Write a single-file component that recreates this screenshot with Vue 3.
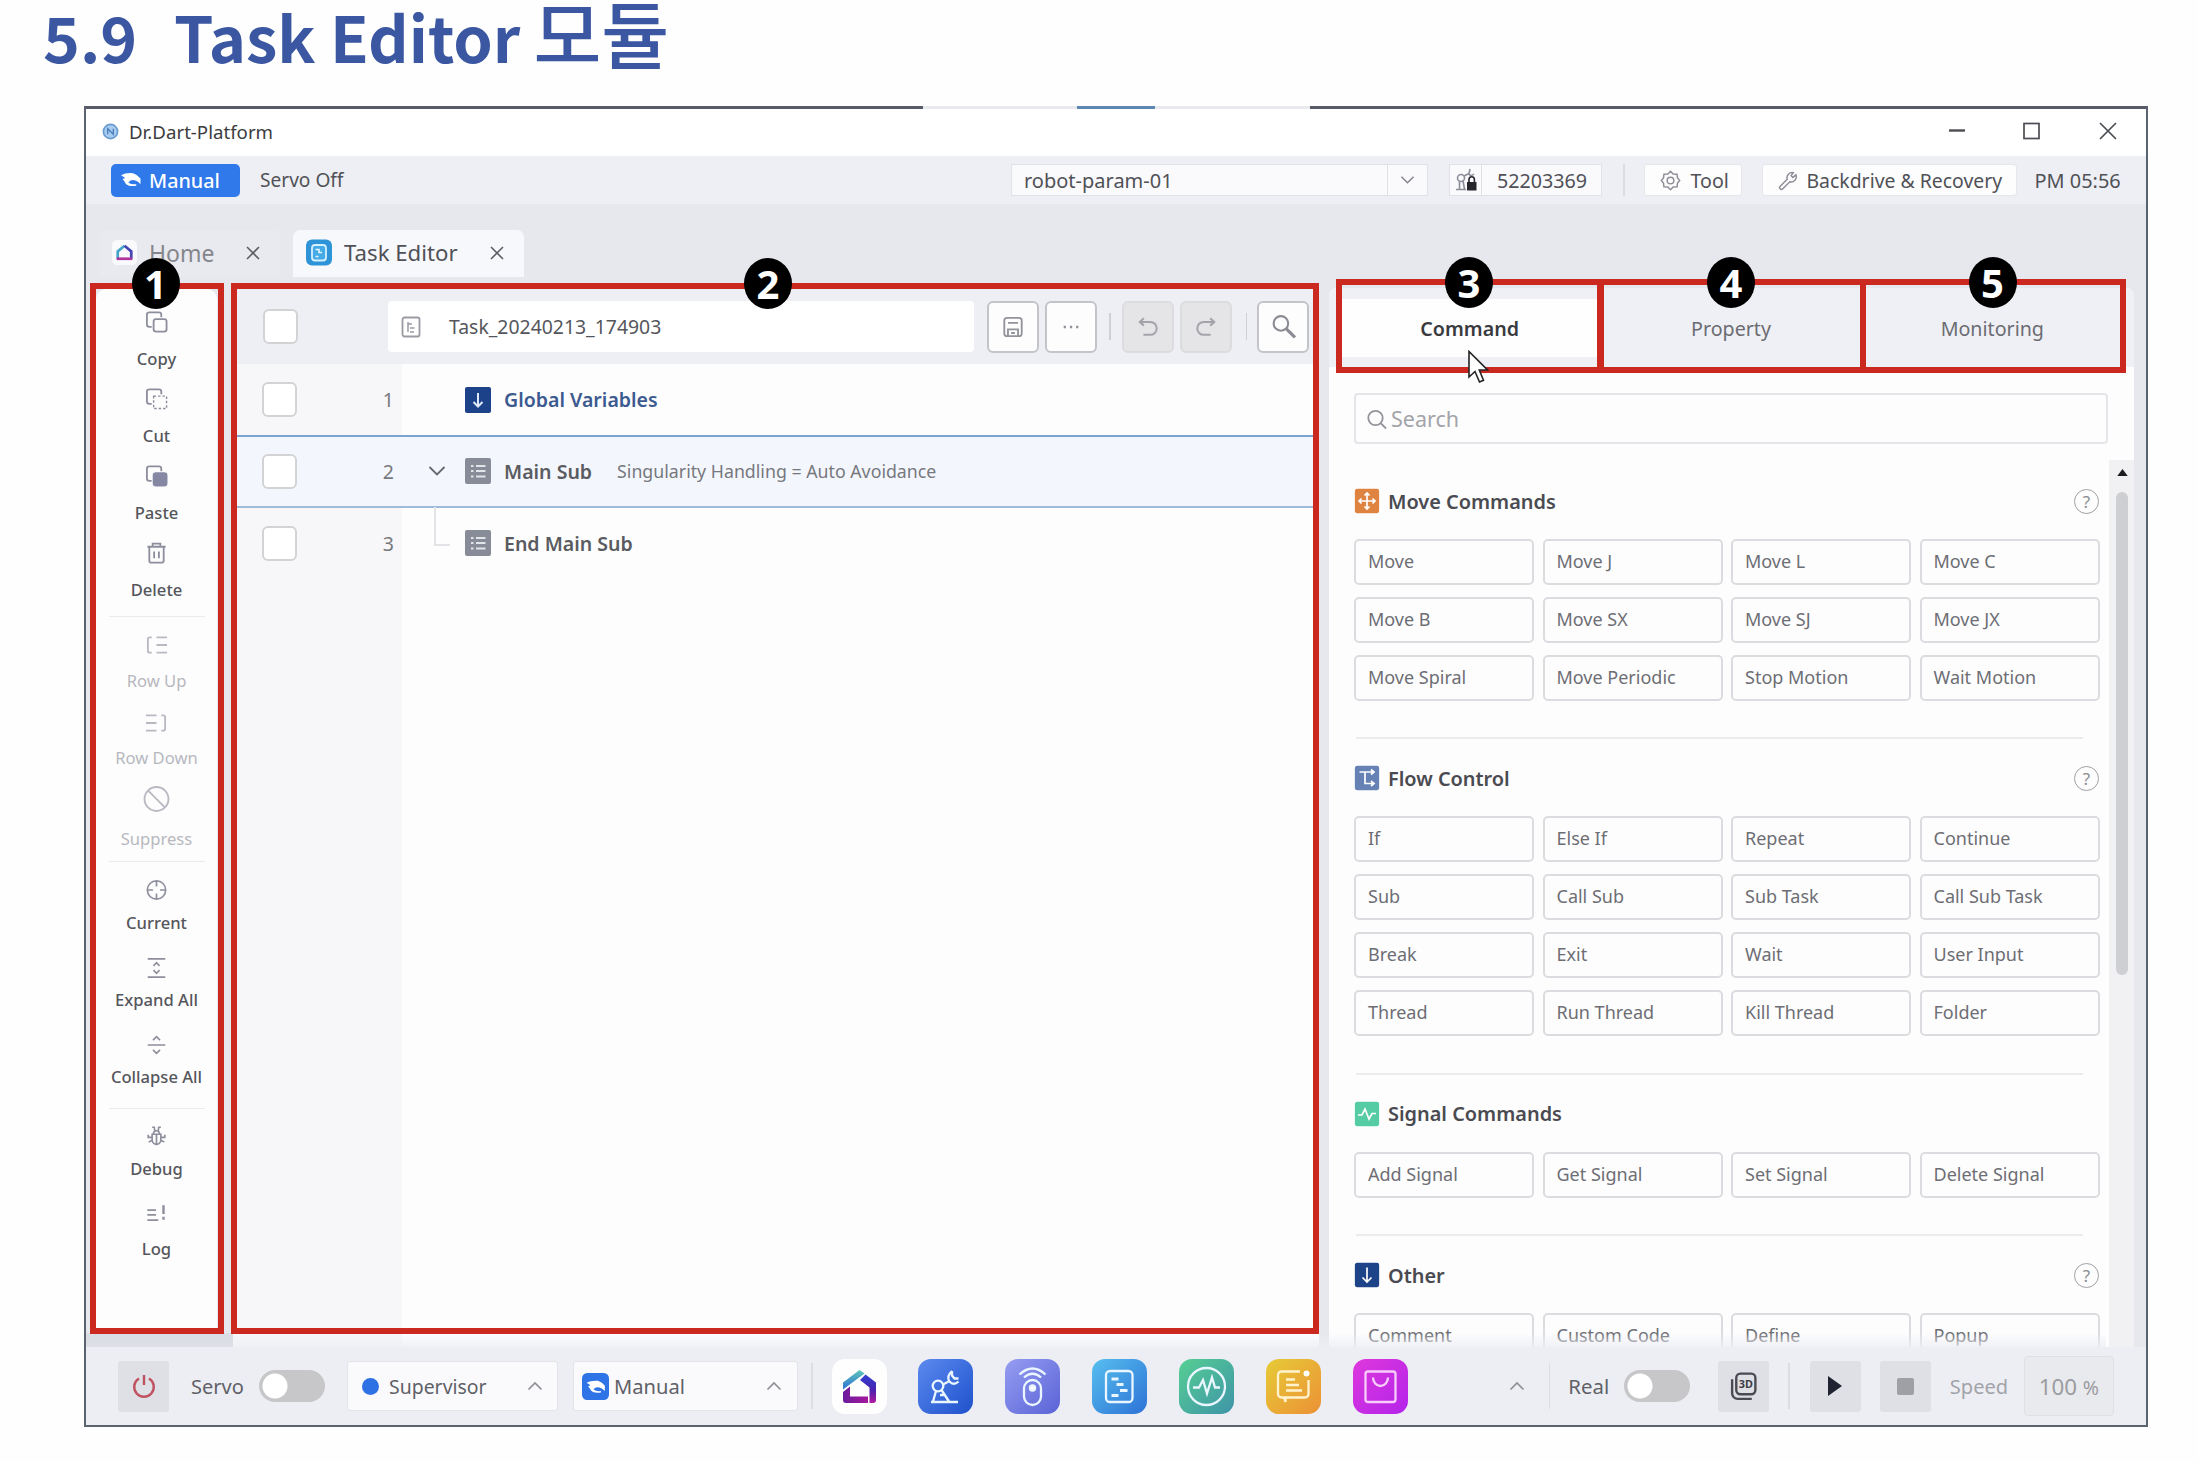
<script setup>
const icons = {
  copy: '<path d="M7 17H4.500a2.500 2.500 0 0 1-2.500-2.500V4.500A2.500 2.500 0 0 1 4.500 2H14.500a2.500 2.500 0 0 1 2.500 2.500V7"/><rect x="9" y="9" width="13.500" height="13" rx="2.500"/>',
  cut: '<path d="M7 17H4.500a2.500 2.500 0 0 1-2.500-2.500V4.500A2.500 2.500 0 0 1 4.500 2H14.500a2.500 2.500 0 0 1 2.500 2.500V7"/><rect x="9" y="9" width="13.500" height="13" stroke-width="1.500" stroke-dasharray="2.600 2"/>',
  paste: '<path d="M7 17H4.500a2.500 2.500 0 0 1-2.500-2.500V4.500A2.500 2.500 0 0 1 4.500 2H14.500a2.500 2.500 0 0 1 2.500 2.500V7"/><rect x="9" y="9" width="13.500" height="13" rx="2.500" fill="#8587a3" stroke="#8587a3"/>',
  trash: '<path d="M2.500 5.500H21.500M8 5V2.200H16V5M4.500 6V20a2 2 0 0 0 2 2H17.500a2 2 0 0 0 2-2V6M9.500 10.500V17.500M14.500 10.500V17.500"/>',
  rowUp: '<path d="M7 4H5a2 2 0 0 0-2 2V18a2 2 0 0 0 2 2H7M12 4H23M12 12H23M12 20H23"/>',
  rowDown: '<path d="M17 4H19a2 2 0 0 1 2 2V18a2 2 0 0 1-2 2H17M1 4H12M1 12H12M1 20H12"/>',
  ban: '<circle cx="12" cy="12" r="12.500"/><path d="M3.300 3.300L20.700 20.700"/>',
  target: '<circle cx="12" cy="12" r="10.500"/><path d="M12 1.500V8M12 16V22.500M1.500 12H8M16 12H22.500"/>',
  expand: '<path d="M2 1.500H22M2 22.500H22M8.500 9.500L12 6L15.500 9.500M8.500 14.500L12 18L15.500 14.500"/>',
  collapse: '<path d="M2 12H22M8 6.500L12 2.500L16 6.500M8 17.500L12 21.500L16 17.500"/>',
  bug: '<path d="M7 10H17V16a5 5.500 0 0 1-10 0ZM12 10V21.500M7 2H9.500L10 6.500M17 2H14.500L14 6.500M8.500 9.500a3.500 3.500 0 0 1 7 0M2.500 10.500V13.500H7M21.500 10.500V13.500H17M3 19L7.500 16.500M21 19L16.500 16.500"/>',
  log: '<path d="M1.500 7.500H11.500M1.500 13H11.500M1.500 19H14" /><path d="M20 2V12M20 15V18.500" stroke-width="2.800"/>',
}

const tools = [
  { cls: 'edit', items: [['copy', 'Copy'], ['cut', 'Cut'], ['paste', 'Paste'], ['trash', 'Delete']] },
  { cls: 'rows off', items: [['rowUp', 'Row Up'], ['rowDown', 'Row Down'], ['ban', 'Suppress']] },
  { cls: 'view', items: [['target', 'Current'], ['expand', 'Expand All'], ['collapse', 'Collapse All']] },
  { cls: 'dev', items: [['bug', 'Debug'], ['log', 'Log']] },
]

const glyphs = {
  move: '<path d="M13 5V21M5 13H21M10.500 7.500L13 5L15.500 7.500M10.500 18.500L13 21L15.500 18.500M7.500 10.500L5 13L7.500 15.500M18.500 10.500L21 13L18.500 15.500"/>',
  flow: '<path d="M5.500 7H20M11 7V18.500H20M17 4.500L20 7L17 9.500M17 16L20 18.500L17 21"/>',
  signal: '<path d="M4 14H8L11 8L15 18L18 12.500H22"/>',
  other: '<path d="M13 5.500V19.500M8.500 15.500L13 20L17.500 15.500"/>',
}

const groups = [
  { name: 'Move Commands', icon: 'move', color: '#df8341', help: true,
    items: ['Move', 'Move J', 'Move L', 'Move C', 'Move B', 'Move SX', 'Move SJ', 'Move JX', 'Move Spiral', 'Move Periodic', 'Stop Motion', 'Wait Motion'] },
  { name: 'Flow Control', icon: 'flow', color: '#6682b4', help: true,
    items: ['If', 'Else If', 'Repeat', 'Continue', 'Sub', 'Call Sub', 'Sub Task', 'Call Sub Task', 'Break', 'Exit', 'Wait', 'User Input', 'Thread', 'Run Thread', 'Kill Thread', 'Folder'] },
  { name: 'Signal Commands', icon: 'signal', color: '#56ccA4', help: false,
    items: ['Add Signal', 'Get Signal', 'Set Signal', 'Delete Signal'] },
  { name: 'Other', icon: 'other', color: '#1d4388', help: true,
    items: ['Comment', 'Custom Code', 'Define', 'Popup'] },
]

const apps = [
  { cls: 'robot', art: '<circle cx="20" cy="27" r="5.300"/><path d="M18 32L15 42.500M23.500 31L31 42.500M22 36H26M13 43H40M25 25.500L30.500 22.500M34 12Q28 17.500 31.500 22.500Q35.500 27 40.500 22.500M34 12V16.500L36.500 19.500H40.500"/>' },
  { cls: 'remote', art: '<rect x="19" y="21" width="17" height="25" rx="8.500"/><circle cx="27.500" cy="29" r="2.600" fill="#fff"/><path d="M14.500 15.500Q27.500 3.500 40.500 15.500M19 18.500Q27.500 11 36 18.500"/>' },
  { cls: 'task', art: '<rect x="14" y="12" width="26.500" height="31" rx="4"/><path d="M19.500 20H26.500M24.500 25.500H31.500M28 31.500H35.500M19.500 36.500H26.500" stroke-width="2.800"/>' },
  { cls: 'monitor', art: '<circle cx="27.500" cy="27.500" r="18.500"/><path d="M14 28.500H20L24 21L28 34.500L33 18.500L36 28.500H41"/>' },
  { cls: 'logs', art: '<path d="M34 12.500H15.500a3.500 3.500 0 0 0-3.500 3.500V35a3.500 3.500 0 0 0 3.500 3.500H18L19.500 43V38.500H39a3.500 3.500 0 0 0 3.500-3.500V21M20 20.500H29M20 26H33M20 31.500H36"/><circle cx="40.500" cy="14.500" r="3" fill="#fff" stroke="none"/>' },
  { cls: 'store', art: '<rect x="12.500" y="12.500" width="30" height="30.500" rx="2.500"/><path d="M20 18.500a7.500 8.500 0 0 0 15 0"/>' },
]

const rows = [
  { n: 1, name: 'Global Variables', kind: 'var' },
  { n: 2, name: 'Main Sub', note: 'Singularity Handling = Auto Avoidance', kind: 'sub', open: true },
  { n: 3, name: 'End Main Sub', kind: 'sub', child: true },
]
</script>

<template>
  <div class="page">
    <h1><span class="num">5.9</span><span class="en">Task Editor</span><span class="ko">모듈</span></h1>

    <main class="window">
      <header class="titlebar">
        <svg class="logo" viewBox="0 0 18 18"><circle cx="9" cy="9" r="7.500" fill="#a9cdf0" stroke="#6a9bd0" stroke-width="1.800"/><path d="M6 12V6L12 12V6" fill="none" stroke="#4d80bd" stroke-width="1.500"/></svg>
        <span>Dr.Dart-Platform</span>
        <svg class="winctl" viewBox="0 0 170 20"><path d="M1 9.500H17" stroke-width="2.400"/><rect x="76" y="2.500" width="15" height="15"/><path d="M152 2L168 18M168 2L152 18"/></svg>
      </header>

      <div class="toolbar">
        <div class="pill">
          <svg viewBox="0 0 20 14"><path d="M1 3Q5 0.500 12.500 1Q17 2.500 19.500 6V11.500Q16 7.500 12 7.500Q9 7.500 8 10Q11 12 15.500 11.500V13Q8 14 5.500 11Q4.500 9 2.500 6.500L5 5.500Z"/></svg>
          Manual
        </div>
        <span class="servo-off">Servo Off</span>
        <div class="combo"><span>robot-param-01</span><i><svg viewBox="0 0 16 10"><path d="M1.500 1.500L8 8L14.500 1.500"/></svg></i></div>
        <div class="serial">
          <i><svg viewBox="0 0 24 26" fill="none" stroke="#8b8d99" stroke-width="1.600"><circle cx="7" cy="11" r="3.500"/><path d="M5.500 14V22M9 14L10.500 22M2 22.500H12M10 9L15 6.500M15 6.500L16 2M15 7Q17 10 20 7"/><rect x="13" y="15" width="9.500" height="8.500" fill="#26262c" stroke="none"/><path d="M15 15V12.500a2.700 2.700 0 0 1 5.400 0V15" stroke="#26262c"/></svg></i>
          <span>52203369</span>
        </div>
        <b class="vr"></b>
        <div class="tbtn tool">
          <svg viewBox="0 0 24 24"><path d="M12 1.500L15 4.500L19.500 4.800L20 9L22.500 12L20 15L19.500 19.200L15 19.500L12 22.500L9 19.500L4.500 19.200L4 15L1.500 12L4 9L4.500 4.800L9 4.500Z"/><circle cx="12" cy="12" r="3.800"/></svg>
          Tool
        </div>
        <div class="tbtn back">
          <svg viewBox="0 0 24 24"><path d="M20.500 5.500L17 8.500L15 6.500L17.500 3A6 6 0 0 0 10.500 10.500L2.500 18.500a2.100 2.100 0 0 0 3 3L13.500 13.500A6 6 0 0 0 20.500 5.500Z"/></svg>
          Backdrive &amp; Recovery
        </div>
        <span class="clock">PM 05:56</span>
      </div>

      <nav class="tabs">
        <div class="tab home">
          <svg class="homeic" viewBox="0 0 24 24"><rect width="24" height="24" rx="5" fill="#fafafd"/><path d="M5.500 18V11L12 5.500" fill="none" stroke="#45a5c8" stroke-width="2.600"/><path d="M12 5.500L18.500 11V18" fill="none" stroke="#4546b4" stroke-width="2.600"/><path d="M4.500 18H19.500" stroke="#b0359c" stroke-width="2.600"/></svg>
          <span>Home</span>
          <svg class="x" viewBox="0 0 14 14"><path d="M1 1L13 13M13 1L1 13"/></svg>
        </div>
        <div class="tab active">
          <svg class="taskic" viewBox="0 0 26 26"><rect width="26" height="26" rx="6" fill="#2f93d8"/><rect x="6" y="5.500" width="14" height="15.500" rx="3" fill="#45abe6" stroke="#d5f0ff" stroke-width="1.800"/><path d="M9.500 10H13V13H16M12.500 17H9.500" fill="none" stroke="#e6f6ff" stroke-width="1.600"/></svg>
          <span>Task Editor</span>
          <svg class="x" viewBox="0 0 14 14"><path d="M1 1L13 13M13 1L1 13"/></svg>
        </div>
      </nav>

      <div class="body">
        <div class="side-wrap">
          <aside class="side">
            <div v-for="g in tools" :key="g.cls" class="tgroup" :class="g.cls">
              <div v-for="[ic, label] in g.items" :key="label" class="titem" :class="ic">
                <svg viewBox="0 0 24 24" v-html="icons[ic]"></svg>
                <span>{{ label }}</span>
              </div>
            </div>
          </aside>
        </div>

        <section class="editor">
          <div class="ehead">
            <b class="check"></b>
            <div class="fname">
              <svg viewBox="0 0 20 22"><rect x="1.500" y="1.500" width="17" height="19" rx="2"/><path d="M7 6V16M7 8H11M9 12H13.500M9 16H13" stroke-width="1.500"/></svg>
              <span>Task_20240213_174903</span>
            </div>
            <div class="ebtn"><svg viewBox="0 0 24 24"><rect x="2.500" y="2" width="19" height="20" rx="3"/><path d="M6.500 7.500H17.500M6.500 22V14.500H17.500V22M10 18.500H14"/></svg></div>
            <div class="ebtn more"><svg viewBox="0 0 24 24"><path d="M4 12H6.500M10.800 12H13.300M17.500 12H20" stroke-width="2.600"/></svg></div>
            <b class="vr v1"></b>
            <div class="ebtn dis"><svg viewBox="0 0 24 24"><path d="M7.500 2.500L3 6.500L7.500 10.500M3 6.500H14.500a7 7 0 0 1 0 14H7"/></svg></div>
            <div class="ebtn dis redo"><svg viewBox="0 0 24 24"><path d="M16.500 2.500L21 6.500L16.500 10.500M21 6.500H9.500a7 7 0 0 0 0 14H17"/></svg></div>
            <b class="vr v2"></b>
            <div class="ebtn find"><svg viewBox="0 0 24 24"><circle cx="9.500" cy="9" r="7"/><path d="M14.500 14L23 22.500" stroke-width="3"/></svg></div>
          </div>
          <div class="rowlist">
            <div v-for="r in rows" :key="r.n" class="row" :class="{ sel: r.open }">
              <div class="gut"><b class="check"></b><span>{{ r.n }}</span></div>
              <div class="twig">
                <svg v-if="r.open" class="chev" viewBox="0 0 18 12"><path d="M1.500 2L9 9.500L16.500 2"/></svg>
                <i v-if="r.child" class="elbow"></i>
              </div>
              <svg class="ric" viewBox="0 0 26 26">
                <template v-if="r.kind === 'var'"><rect width="26" height="26" rx="2" fill="#1c4389"/><path d="M13 6V19M8.500 15L13 19.500L17.500 15" stroke="#dfe9fa" stroke-width="2"/></template>
                <template v-else><rect width="26" height="26" rx="2" fill="#888b98"/><path d="M6 8H8.500M11 8H20.500M6 13H8.500M11 13H20.500M6 18.500H8.500M11 18.500H20.500" stroke="#e3e4ea" stroke-width="2"/></template>
              </svg>
              <strong :class="r.kind">{{ r.name }}</strong>
              <em v-if="r.note">{{ r.note }}</em>
            </div>
            <div class="rest"></div>
          </div>
        </section>

        <section class="panel">
          <div class="ptabs"><div class="on">Command</div><div>Property</div><div>Monitoring</div></div>
          <div class="search">
            <svg viewBox="0 0 22 22"><circle cx="9.500" cy="10" r="7.200"/><path d="M15 15.500L20 20.500"/></svg>
            <span>Search</span>
          </div>
          <div class="scroll">
            <div class="groups">
              <section v-for="g in groups" :key="g.name" class="group">
                <header>
                  <svg class="gic" viewBox="0 0 26 26"><rect width="26" height="26" rx="3" :fill="g.color"/><g v-html="glyphs[g.icon]"></g></svg>
                  <h2>{{ g.name }}</h2>
                  <span v-if="g.help" class="help">?</span>
                </header>
                <div class="cmds"><div v-for="c in g.items" :key="c">{{ c }}</div></div>
              </section>
            </div>
            <div class="bar"><svg viewBox="0 0 12 8"><path d="M6 0L12 8H0Z"/></svg><i></i></div>
          </div>
        </section>
      </div>

      <footer class="dock">
        <div class="sq power"><svg viewBox="0 0 24 24"><path d="M7 4.500A9.800 9.800 0 1 0 17 4.500M12 1V11"/></svg></div>
        <span class="t-servo">Servo</span>
        <b class="toggle"></b>
        <div class="sel1"><i class="dot"></i><span>Supervisor</span><svg class="up" viewBox="0 0 16 10"><path d="M1.500 8.500L8 2L14.500 8.500"/></svg></div>
        <div class="sel2">
          <svg class="mic" viewBox="0 0 26 26"><rect width="26" height="26" rx="5" fill="#2e74e6"/><path transform="translate(3.500 6.500) scale(.95)" d="M1 3Q5 0.500 12.500 1Q17 2.500 19.500 6V11.500Q16 7.500 12 7.500Q9 7.500 8 10Q11 12 15.500 11.500V13Q8 14 5.500 11Q4.500 9 2.500 6.500L5 5.500Z" fill="#fff"/></svg>
          <span>Manual</span><svg class="up" viewBox="0 0 16 10"><path d="M1.500 8.500L8 2L14.500 8.500"/></svg>
        </div>
        <b class="vr d1"></b>
        <div class="apps">
          <svg viewBox="0 0 55 55" class="app">
            <defs><linearGradient id="hl" x1="0" y1="0" x2="0" y2="1"><stop offset="0" stop-color="#5cc7b8"/><stop offset="1" stop-color="#2e6fd6"/></linearGradient><linearGradient id="hr" x1="0" y1="0" x2="0" y2="1"><stop offset="0" stop-color="#2f3fd0"/><stop offset=".55" stop-color="#4a22b0"/><stop offset="1" stop-color="#b3189c"/></linearGradient><linearGradient id="hb"><stop offset="0" stop-color="#6a1b9c"/><stop offset="1" stop-color="#a5189c"/></linearGradient></defs>
            <path d="M27.500 11L32.500 14.500L11 30.500V23.500Z" fill="url(#hl)"/>
            <path d="M33.500 15.500L44 23.500V41a3 3 0 0 1-3 3H37.500V28.500L28 21Z" fill="url(#hr)"/>
            <path d="M11 33L18 27.500V37.500H36V44H14a3 3 0 0 1-3-3Z" fill="url(#hb)"/>
          </svg>
          <svg v-for="a in apps" :key="a.cls" viewBox="0 0 55 55" class="app" :class="a.cls" v-html="a.art"></svg>
        </div>
        <svg class="up u3" viewBox="0 0 16 10"><path d="M1.500 8.500L8 2L14.500 8.500"/></svg>
        <b class="vr d2"></b>
        <span class="t-real">Real</span>
        <b class="toggle g2"></b>
        <div class="sq three"><svg viewBox="0 0 26 30"><rect x="6" y="2.500" width="18.500" height="20" rx="4"/><path d="M2 8V21.500a5.500 5.500 0 0 0 5.500 5.500H21"/><text x="15.200" y="16.500" text-anchor="middle">3D</text></svg></div>
        <b class="vr d3"></b>
        <div class="sq play"><svg viewBox="0 0 14 20"><path d="M0 0L14 10L0 20Z"/></svg></div>
        <div class="sq stop"><i></i></div>
        <span class="t-speed">Speed</span>
        <div class="pct">100&nbsp;<small>%</small></div>
      </footer>
    </main>

    <div class="mark m1"><span>1</span></div>
    <div class="mark m2"><span>2</span></div>
    <div class="mark m3"><span>3</span></div>
    <div class="mark m4"><span>4</span></div>
    <div class="mark m5"><span>5</span></div>
    <svg class="cursor" viewBox="0 0 21 34"><path d="M1 1.500V27L7 21.500L11.500 32L15.500 30.300L11.300 20H19.500Z" fill="#fff" stroke="#222" stroke-width="1.600"/></svg>
  </div>
</template>

<style>
body { background: #fefefe; }
</style>

<style scoped>
.page { position: relative; width: 2198px; height: 1462px; overflow: hidden; background: #fefefe; font-family: "Noto Sans", "Noto Sans CJK KR", sans-serif; font-size: 20px; color: #55565c; }
.page * { box-sizing: border-box; }
svg { display: block; flex: none; fill: none; }
i, em { font-style: normal; }
span, strong { white-space: nowrap; }
h1 { display: flex; align-items: baseline; height: 106px; margin: 0; padding: 1px 0 0 43px; font: 700 63.200px/60px "Noto Sans CJK KR", sans-serif; color: #3b57a2; }
.num { width: 131px; font-size: 62.500px; }
.ko { margin-left: 13px; font-size: 73.800px; font-weight: 500; }

.window { display: flex; flex-direction: column; width: 2064px; height: 1321px; margin-left: 84px; border: 2px solid #5c6370; border-top: 0; background: #e7e8ee; }
.titlebar { display: flex; align-items: center; height: 50px; padding: 0 28px 0 16px; background: linear-gradient(90deg, #565b67 837px, #e9eaee 837px, #e9eaee 991px, #5d87ae 991px, #5d87ae 1069px, #e9eaee 1069px, #e9eaee 1224px, #565b67 1224px) 0 0 / 100% 3px no-repeat #fff; font-size: 18.660px; color: #3c3c40; }
.logo { width: 17px; height: 17px; margin-right: 10px; }
.winctl { width: 170px; height: 20px; margin-left: auto; stroke: #4c4d52; stroke-width: 1.700; }

.toolbar { display: flex; align-items: center; height: 48px; padding: 0 0 0 25px; background: #eeeff4; color: #505157; }
.pill { display: flex; align-items: center; width: 129px; height: 33px; padding-left: 9px; border-radius: 5px; background: #2f79ea; color: #fff; font-size: 19.760px; font-weight: 500; }
.pill svg { width: 21px; height: 15px; margin: 0 8px 2px 0; fill: #fff; }
.servo-off { flex: none; width: 771px; padding-left: 20px; font-size: 19.130px; }
.combo { display: flex; align-items: center; flex: none; width: 417px; height: 32px; border: 1px solid #e1e2e7; background: #fafafc; padding-left: 12px; justify-content: space-between; }
.combo i { display: flex; align-items: center; justify-content: center; width: 40px; height: 100%; border-left: 1px solid #e0e1e6; }
.combo svg { width: 15px; height: 10px; stroke: #85868d; stroke-width: 1.600; }
.serial { display: flex; align-items: center; flex: none; width: 153px; height: 32px; margin-left: 21px; border: 1px solid #e1e2e7; background: #fafafc; font-size: 19.710px; }
.serial i { display: flex; align-items: center; justify-content: center; width: 32px; height: 100%; margin-right: 15px; border-right: 1px solid #e0e1e6; }
.serial svg { width: 24px; height: 26px; }
.vr { display: block; flex: none; width: 1.500px; height: 32px; background: #dcdde2; }
.toolbar .vr { margin: 0 19px 0 21px; }
.tbtn { display: flex; align-items: center; flex: none; height: 32px; border: 1px solid #e6e7eb; border-radius: 3px; background: #fdfdfe; white-space: nowrap; }
.tbtn svg { width: 21px; height: 21px; stroke: #8e8f98; stroke-width: 1.700; }
.tool { width: 98px; padding-left: 15px; font-size: 19.600px; }
.tool svg { margin-right: 10px; }
.back { width: 255px; margin-left: 20px; padding-left: 15px; font-size: 19.420px; }
.back svg { margin-right: 8px; }
.clock { margin-left: 18px; font-size: 19.920px; }

.tabs { display: flex; height: 84px; padding: 26px 0 0 14px; color: #505157; }
.tab { display: flex; align-items: center; height: 47px; padding-bottom: 1.500px; border-radius: 7px 7px 0 0; }
.home { width: 180px; padding-left: 12px; font-size: 23px; color: #85868c; background: #e9eaef; }
.homeic { width: 25px; height: 25px; margin-right: 12px; }
.home .x { margin-left: 32px; }
.active { width: 231px; margin-left: 13px; padding-left: 13px; background: #f7f8fb; font-size: 22.200px; }
.taskic { width: 26px; height: 27px; margin-right: 12px; }
.active .x { margin-left: 32px; }
.x { width: 14px; height: 14px; stroke: #5d5e64; stroke-width: 1.600; }

.body { display: flex; height: 1059px; }
.side-wrap { width: 147px; background: linear-gradient(#dadce3, #dfe0e7) 0 100% / 100% 14px no-repeat; padding: 1px 0 14px 10px; }
.side { width: 121px; height: 100%; padding: 20px 0 0; border-radius: 10px 10px 0 0; background: #fdfdfe; }
.tgroup { display: flex; flex-direction: column; align-items: center; width: 96px; margin: 0 auto; }
.titem { display: flex; flex-direction: column; align-items: center; font-size: 16.600px; font-weight: 500; color: #55565b; }
.titem svg { width: 23px; height: 26px; overflow: visible; stroke: #8e8f9c; stroke-width: 1.900; }
.titem span { line-height: 22px; }
.tgroup + .tgroup { border-top: 1.500px solid #ebebef; }
.edit { gap: 16.100px; padding-bottom: 15px; }
.edit .titem { gap: 13px; }
.rows { gap: 18px; padding: 15px 0 11px; }
.rows .titem { gap: 11.500px; }
.rows .ban { gap: 16px; margin-top: -1px; }
.off .titem { font-weight: 400; color: #b7b8be; }
.off svg { stroke: #b9bac1; }
.view { gap: 21px; padding: 15px 0 19.500px; }
.view .titem { gap: 8.300px; }
.view svg, .dev svg { width: 21px; }
.dev { gap: 20.500px; padding-top: 14.500px; }
.dev .titem { gap: 9px; }
.dev .log { gap: 11.500px; }

.editor { display: flex; flex-direction: column; width: 1086px; background: #fdfdfe; }
.ehead { display: flex; align-items: center; height: 76px; padding: 1px 0 0 30px; background: #eeeff4; }
.check { display: block; flex: none; width: 35px; height: 35px; border: 2px solid #d3d3d6; border-radius: 6px; background: #fff; }
.fname { display: flex; align-items: center; width: 586px; height: 51px; margin-left: 90px; padding-left: 13px; border-radius: 4px; background: #fff; font-size: 19.400px; }
.fname svg { width: 20px; height: 22px; margin-right: 28px; stroke: #9a9ba2; stroke-width: 1.800; }
.ebtn { display: flex; align-items: center; justify-content: center; flex: none; width: 52px; height: 52px; margin-left: 13px; border: 2px solid #c3c4c9; border-radius: 6px; background: #fdfdfe; }
.ebtn svg { width: 22px; height: 22px; stroke: #93949b; stroke-width: 2; }
.more { margin-left: 6px; }
.dis { margin-left: 11px; border-color: #dcdcdf; background: #e5e5e8; }
.dis svg { stroke: #a3a4aa; stroke-width: 2.200; }
.redo { margin-left: 6px; }
.find { margin-left: 10px; }
.find svg { width: 25px; height: 25px; stroke: #8b8c93; }
.ehead .vr { height: 27px; background: #cfd0d5; }
.v1 { margin-left: 12px; }
.v2 { margin-left: 14px; }

.rowlist { display: flex; flex-direction: column; flex: 1; }
.row { display: flex; align-items: center; height: 71px; }
.gut { display: flex; align-items: center; justify-content: space-between; width: 169px; height: 100%; padding: 0 8px 0 29px; background: #f7f7f9; font-size: 19.500px; color: #77787e; }
.row.sel { height: 72.500px; border-top: 2px solid #7ba5ce; border-bottom: 2.500px solid #9ebcda; background: #f3f7fd; }
.sel .gut { background: transparent; }
.rest { flex: 1; background: linear-gradient(90deg, #f7f7f9 169px, #fdfdfe 169px); }
.twig { position: relative; display: flex; align-items: center; width: 63px; height: 100%; padding-left: 26px; }
.chev { width: 18px; height: 12px; stroke: #67686e; stroke-width: 1.800; }
.elbow { width: 16px; height: 39px; margin: -33px 0 0 6px; border: solid #e3e4e8; border-width: 0 0 2.500px 2px; }
.ric { width: 26px; height: 26px; }
.row strong { margin-left: 13px; font-size: 19.550px; font-weight: 600; color: #5a5b61; }
.row strong.var { color: #3c5a90; }
.row em { margin-left: 25px; font-size: 17.750px; color: #77787e; }

.panel { display: flex; flex-direction: column; width: 805px; margin-left: 10px; border-radius: 8px 8px 0 0; background: #fdfdfe; }
.ptabs { display: flex; height: 79px; padding: 11px 11px 10px 10px; background: #eff0f5; border-radius: 8px 8px 0 0; }
.ptabs div { flex: 1; padding-top: 1px; line-height: 58px; text-align: center; font-size: 19.650px; color: #6b6c72; }
.ptabs .on { background: #fefefe; font-weight: 600; color: #3a3b40; }
.search { display: flex; align-items: center; height: 51px; margin: 26px 26px 0 25px; padding-left: 10px; border: 2px solid #e4e5e8; border-radius: 4px; font-size: 21.500px; color: #a3a4a9; }
.search svg { width: 22px; height: 22px; margin-right: 3px; stroke: #94959b; stroke-width: 1.800; }
.scroll { display: flex; flex: 1; height: 0; margin-top: 16px; overflow: hidden; }
.groups { flex: 1; overflow: hidden; padding: 0 9px 0 25px; }
.group { padding: 28px 0 36.400px; }
.group + .group { background: linear-gradient(#ececef, #ececef) 2px 0 / 727px 2px no-repeat; }
.group header { display: flex; align-items: center; height: 26px; }
.gic { width: 26px; height: 26px; stroke: #fff; stroke-width: 1.700; }
h2 { margin: 1px auto 0 8px; font-size: 19.900px; font-weight: 600; line-height: 26px; color: #4a4b51; }
.help { display: flex; align-items: center; justify-content: center; width: 25px; height: 25px; border: 1.800px solid #a0a1a6; border-radius: 50%; font-size: 17px; line-height: 1; color: #8b8c91; }
header .help { margin-right: 1px; }
.cmds { display: grid; grid-template-columns: repeat(4, 180px); column-gap: 8.500px; row-gap: 12px; margin-top: 25px; }
.cmds div { height: 46px; padding-left: 12px; border: 2px solid #dbdcdf; border-radius: 5px; font-size: 18px; line-height: 41px; color: #6d6e74; white-space: nowrap; }
.bar { display: flex; flex-direction: column; align-items: center; width: 25px; background: #f1f1f3; padding: 9px 1px 0 2px; }
.bar svg { width: 11px; height: 7px; fill: #1d1d1f; }
.bar i { width: 12px; height: 483px; margin-top: 16px; border-radius: 6px; background: #cecfd2; }

.dock { position: relative; display: flex; align-items: center; height: 78px; padding: 0 0 0 32px; background: #edeef4; color: #606167; }
.dock::before { content: ""; position: absolute; left: 147px; right: 40px; top: -14px; height: 14px; background: linear-gradient(#edeef400, #edeef4d0); }
.sq { display: flex; align-items: center; justify-content: center; flex: none; width: 51px; height: 51px; border-radius: 3px; background: #dfe0e5; }
.power svg { width: 24px; height: 24px; stroke: #bf5160; stroke-width: 2.400; }
.t-servo { width: 90px; padding-left: 22px; font-size: 20.050px; }
.toggle { flex: none; width: 66px; height: 32px; border-radius: 16px; background: radial-gradient(circle at 16px 50%, #fff 12px, #c7c7c9 13px); }
.sel1, .sel2 { display: flex; align-items: center; height: 50px; border: 1px solid #e3e4e9; border-radius: 3px; background: #fafafc; }
.sel1 { width: 211px; margin-left: 22px; padding: 0 14px 0 14px; font-size: 19.440px; }
.dot { width: 17px; height: 17px; margin-right: 10px; border-radius: 50%; background: #2e71e5; }
.sel2 { width: 225px; margin-left: 15px; padding: 0 15px 0 8px; font-size: 20.120px; }
.mic { width: 27px; height: 27px; margin-right: 5px; }
.up { width: 16px; height: 10px; margin-left: auto; stroke: #8f9096; stroke-width: 1.700; }
.dock .vr { height: 46px; }
.d1 { margin-left: 13px; }
.apps { display: flex; gap: 31.900px; margin-left: 19px; }
.app { width: 55px; height: 55px; border-radius: 13px; background: #fefefe; stroke: #eaf6ff; stroke-width: 2.300; }
.app:first-child { stroke: none; }
.robot { background: linear-gradient(135deg, #5b8af0, #1f51cb); }
.remote { background: linear-gradient(135deg, #959df2, #5a63d6); }
.task { background: linear-gradient(135deg, #56bfee, #2d72d6); }
.monitor { background: linear-gradient(135deg, #56cf93, #3e94a8); }
.logs { background: linear-gradient(135deg, #e6cb36, #ec9136); stroke: #fff3cf; }
.store { background: linear-gradient(135deg, #de38dc, #b324ea); stroke: #f8cdfb; }
.dock .u3 { margin-left: 101px; }
.d2 { margin-left: 24px; }
.t-real { width: 74px; padding-left: 18px; font-size: 20.400px; }
.three { margin-left: 28px; }
.three svg { width: 27px; height: 31px; stroke: #4a4b52; stroke-width: 2.300; }
.three text { font: 700 10.500px "Noto Sans", sans-serif; fill: #3c3d44; stroke: none; }
.d3 { margin-left: 19px; }
.play { margin-left: 20px; }
.play svg { width: 14px; height: 20px; fill: #1f2230; }
.stop { margin-left: 19px; }
.stop i { width: 17px; height: 17px; border-radius: 2px; background: #9fa0a5; }
.t-speed { width: 93px; padding-left: 19px; font-size: 20.060px; color: #a2a3a8; }
.pct { display: flex; align-items: center; justify-content: center; width: 90px; height: 60px; border: 1.500px solid #dfe0e3; border-radius: 4px; background: #e9eaed; font-size: 22.300px; color: #9b9ca1; }
.pct small { font-size: 19.500px; padding-top: 2px; }

.mark { position: absolute; border: 6px solid #cb2920; }
.mark span { position: absolute; left: 50%; top: -31px; width: 48px; height: 51px; margin-left: -24.500px; border-radius: 50%; background: #000; color: #fff; font-size: 40px; font-weight: 700; line-height: 51px; text-align: center; }
.m1 { left: 89.500px; top: 282.500px; width: 134px; height: 1051px; }
.m1 span { margin-left: -25px; }
.m2 { left: 231px; top: 282.500px; width: 1088px; height: 1051px; }
.m2 span { left: 531.500px; }
.m3, .m4, .m5 { top: 279px; height: 94px; }
.m3 span, .m4 span, .m5 span { top: -28px; }
.m3 { left: 1336px; width: 267px; }
.m4 { left: 1597.500px; width: 268px; }
.m5 { left: 1860px; width: 266px; }
.cursor { position: absolute; left: 1468px; top: 350px; width: 21px; height: 34px; }
</style>
